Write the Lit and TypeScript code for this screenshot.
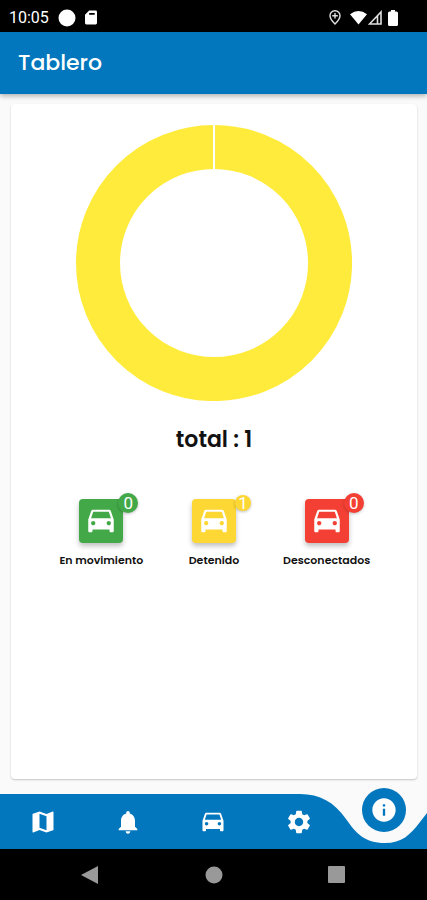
import { LitElement, html, css, svg } from "lit";
import { customElement, property, state } from "lit/decorators.js";
import { classMap } from "lit/directives/class-map.js";

const paths = {
  map: "M20.5 3l-.16.03L15 5.1 9 3 3.36 4.9c-.21.07-.36.25-.36.48V20.500c0 .28.22.5.5.5l.16-.03L9 18.900l6 2.100 5.640-1.900c.21-.07.36-.25.36-.48V3.500c0-.28-.22-.5-.5-.5zM15 19l-6-2.110V5l6 2.110V19z",
  bell: "M12 22c1.100 0 2-.9 2-2h-4c0 1.100.89 2 2 2zm6-6v-5c0-3.070-1.640-5.640-4.500-6.320V4c0-.83-.67-1.500-1.500-1.500s-1.500.67-1.500 1.500v.68C7.630 5.360 6 7.920 6 11v5l-2 2v1h16v-1l-2-2z",
  car: "M18.920 5.010C18.720 4.420 18.160 4 17.500 4h-11c-.66 0-1.210.42-1.420 1.010L3 11v8c0 .55.45 1 1 1h1c.55 0 1-.45 1-1v-1h12v1c0 .55.45 1 1 1h1c.55 0 1-.45 1-1v-8l-2.080-5.990zM6.500 15c-.83 0-1.500-.67-1.500-1.500S5.670 12 6.500 12s1.500.67 1.500 1.500S7.330 15 6.500 15zm11 0c-.83 0-1.500-.67-1.500-1.500s.67-1.500 1.500-1.500 1.500.67 1.500 1.500-.67 1.500-1.500 1.500zM5 10l1.500-4.500h11L19 10H5z",
  gear: "M19.140 12.940c.04-.3.06-.61.06-.94 0-.32-.02-.64-.07-.94l2.030-1.580c.18-.14.23-.41.12-.61l-1.920-3.320c-.12-.22-.37-.29-.59-.22l-2.390.96c-.5-.38-1.030-.7-1.620-.94l-.36-2.540c-.04-.24-.24-.41-.48-.41h-3.840c-.24 0-.43.17-.47.41l-.36 2.540c-.59.24-1.130.57-1.620.94l-2.390-.96c-.22-.08-.47 0-.59.22L2.740 8.870c-.12.21-.08.47.12.61l2.030 1.580c-.05.3-.09.63-.09.94s.02.64.07.94l-2.030 1.580c-.18.14-.23.41-.12.61l1.920 3.320c.12.22.37.29.59.22l2.390-.96c.5.38 1.030.7 1.620.94l.36 2.540c.05.24.24.41.48.41h3.840c.24 0 .44-.17.47-.41l.36-2.540c.59-.24 1.130-.56 1.620-.94l2.390.96c.22.08.47 0 .59-.22l1.920-3.320c.12-.22.07-.47-.12-.61l-2.010-1.580zM12 15.600c-1.980 0-3.600-1.620-3.600-3.600s1.620-3.600 3.600-3.600 3.600 1.620 3.600 3.600-1.620 3.600-3.600 3.600z",
  info: "M12 2C6.480 2 2 6.480 2 12s4.480 10 10 10 10-4.480 10-10S17.520 2 12 2zm1 15h-2v-6h2v6zm0-8h-2V7h2v2z",
};
type IconName = keyof typeof paths;

@customElement("app-icon")
class AppIcon extends LitElement {
  static styles = css`
    :host { display: block; width: 28px; height: 28px; }
    :host([size="large"]) { width: 34px; height: 34px; }
    svg { display: block; width: 100%; height: 100%; fill: currentColor; }
  `;
  @property() name: IconName = "map";
  render() {
    return html`<svg viewBox="0 0 24 24" aria-hidden="true"><path d=${paths[this.name]} /></svg>`;
  }
}

@customElement("status-bar")
class StatusBar extends LitElement {
  static styles = css`
    :host {
      display: flex; align-items: center; justify-content: space-between;
      height: 32px; padding: 3px 29px 0 9px; box-sizing: border-box;
      background: #000; color: #fff;
      font: 400 16px/20px Roboto, sans-serif;
    }
    .group { display: flex; align-items: center; }
    .left { gap: 9px; }
    svg { display: block; fill: #fff; }
    .pin { margin-right: 9px; }
    .signal { margin: 0 6px 0 1px; }
  `;
  render() {
    return html`
      <div class="group left">
        <span>10:05</span>
        <svg width="18" height="18" viewBox="0 0 18 18"><circle cx="9" cy="9" r="8.500" /></svg>
        <svg width="12" height="15" viewBox="0 0 13 15">
          <path fill-rule="evenodd" d="M4.500 0H11.500Q13 0 13 1.500V13.500Q13 15 11.500 15H1.500Q0 15 0 13.500V4.500ZM4.500 2.500V4.500H10.500V2.500Z" />
        </svg>
      </div>
      <div class="group">
        <svg class="pin" width="12" height="15" viewBox="0 0 12 15">
          <path d="M6 .8C3 .8 1 3 1 5.700 1 9 6 14 6 14s5-5 5-8.300C11 3 9 .8 6 .8Z" fill="none" stroke="#e0e0e0" stroke-width="1.400" />
          <path d="M6 3v5.600M3.200 5.800h5.600" stroke="#e0e0e0" stroke-width="1.400" />
        </svg>
        <svg width="17" height="15" viewBox="0 0 18 15"><path d="M0 4Q9-3 18 4L9 15Z" /></svg>
        <svg class="signal" width="14" height="15" viewBox="0 0 14 15">
          <path d="M13 2V14H1.500ZM9.500 6V14" fill="none" stroke="#e0e0e0" stroke-width="1.600" />
        </svg>
        <svg width="10" height="16" viewBox="0 0 10 16">
          <path d="M3 0H7V1.500H8.500Q10 1.500 10 3V14.500Q10 16 8.500 16H1.500Q0 16 0 14.500V3Q0 1.500 1.500 1.500H3Z" />
        </svg>
      </div>
    `;
  }
}

@customElement("status-tile")
class StatusTile extends LitElement {
  static styles = css`
    :host { display: flex; flex-direction: column; align-items: center; }
    button {
      position: relative; display: grid; place-items: center;
      width: 44px; height: 44px; padding: 0; border: 0; border-radius: 4px;
      color: #fff; background: var(--tone);
      box-shadow: 0 3px 5px rgba(0, 0, 0, 0.25);
    }
    .badge {
      position: absolute; top: -6px; right: -15px;
      display: grid; place-items: center;
      width: 20px; height: 20px; border-radius: 50%;
      background: var(--tone); font: 400 17px/20px Roboto, sans-serif;
      box-shadow: 0 1px 3px rgba(0, 0, 0, 0.25);
    }
    .badge.small { top: -4px; width: 16px; height: 16px; line-height: 16px; }
    .green { --tone: #43a948; }
    .yellow { --tone: #fdd734; }
    .red { --tone: #f44034; }
    .label { margin-top: 9px; font: 600 11px/16px Poppins, Inter, sans-serif; color: #111; white-space: nowrap; }
  `;
  @property() label = "";
  @property() tone = "green";
  @property({ type: Number }) count = 0;
  render() {
    return html`
      <button type="button" class=${this.tone} aria-labelledby="label">
        <app-icon name="car" size="large"></app-icon>
        <span class=${classMap({ badge: true, small: this.count === 1 })}>${this.count}</span>
      </button>
      <span class="label" id="label">${this.label}</span>
    `;
  }
}

@customElement("tab-bar")
class TabBar extends LitElement {
  static styles = css`
    :host { display: block; position: relative; height: 55px; color: #fff; }
    .shape { position: absolute; inset: 0; width: 100%; height: 100%; fill: #0277bd; }
    nav { position: relative; display: grid; grid-template-columns: repeat(5, 1fr); height: 100%; }
    button {
      display: grid; place-items: center;
      padding: 0; border: 0; background: none; color: inherit;
    }
    .active {
      place-self: start center; width: 44px; height: 44px; margin-top: -6px;
      border-radius: 50%; background: #0277bd;
    }
  `;
  @state() private active = "info";
  private items: { icon: IconName; label: string }[] = [
    { icon: "map", label: "Mapa" },
    { icon: "bell", label: "Alertas" },
    { icon: "car", label: "Vehículos" },
    { icon: "gear", label: "Ajustes" },
    { icon: "info", label: "Tablero" },
  ];
  render() {
    return html`
      <svg class="shape" viewBox="0 0 427 55" preserveAspectRatio="none" aria-hidden="true">
        <path d="M0 0H300C320 0 334 8 346 25C356 39 364 49 385 49C402 49 410 41 420 28L427 19V55H0Z" />
      </svg>
      <nav>
        ${this.items.map((item) => html`
          <button type="button" aria-label=${item.label}
            class=${classMap({ active: item.icon === this.active })}>
            <app-icon name=${item.icon}></app-icon>
          </button>`)}
      </nav>
    `;
  }
}

@customElement("app-root")
class AppRoot extends LitElement {
  static styles = css`
    :host {
      display: flex; flex-direction: column; min-height: 100vh;
      background: #fafafa; color: #111;
      font-family: Poppins, Inter, sans-serif;
    }
    header {
      display: flex; align-items: center; height: 62px; padding: 0 18px;
      box-sizing: border-box; background: #0277bd; color: #fff;
      box-shadow: 0 2px 5px rgba(0, 0, 0, 0.3);
    }
    h1 { margin: 0; font-size: 22px; line-height: 28px; font-weight: 500; }
    main {
      flex: 1; display: flex; flex-direction: column; align-items: center;
      margin: 10px 10px 15px 11px; padding-top: 21px;
      border-radius: 4px; background: #fff;
      box-shadow: 0 1px 2px rgba(0, 0, 0, 0.22);
    }
    .donut { display: block; width: 68%; }
    h2 { margin: 25px 0 0; font-size: 22px; line-height: 28px; font-weight: 600; }
    .tiles {
      display: grid; grid-template-columns: repeat(3, 1fr);
      align-self: stretch; margin-top: 45px; padding: 0 34px;
    }
    .system {
      display: flex; justify-content: space-between; align-items: center;
      height: 51px; padding: 0 81px; background: #000;
    }
    .system button { display: block; padding: 0; border: 0; background: none; }
    .system svg { display: block; width: 18px; height: 18px; fill: #999; }
  `;
  private key(label: string, shape: unknown) {
    return html`<button type="button" aria-label=${label}><svg viewBox="0 0 18 18">${shape}</svg></button>`;
  }
  render() {
    return html`
      <status-bar></status-bar>
      <header><h1>Tablero</h1></header>
      <main>
        <svg class="donut" viewBox="0 0 276 276" aria-hidden="true">
          <circle cx="138" cy="138" r="116" fill="none" stroke="#ffeb3b" stroke-width="44" />
          <path d="M138 0V45" stroke="#fff" stroke-width="2" />
        </svg>
        <h2>total : 1</h2>
        <div class="tiles">
          <status-tile label="En movimiento" tone="green" count="0"></status-tile>
          <status-tile label="Detenido" tone="yellow" count="1"></status-tile>
          <status-tile label="Desconectados" tone="red" count="0"></status-tile>
        </div>
      </main>
      <tab-bar></tab-bar>
      <div class="system">
        ${this.key("Atrás", svg`<path d="M0 9L17 0V18Z" />`)}
        ${this.key("Inicio", svg`<circle cx="9" cy="9" r="8.500" />`)}
        ${this.key("Recientes", svg`<rect x="0" y="0" width="17" height="17" rx="1" />`)}
      </div>
    `;
  }
}
